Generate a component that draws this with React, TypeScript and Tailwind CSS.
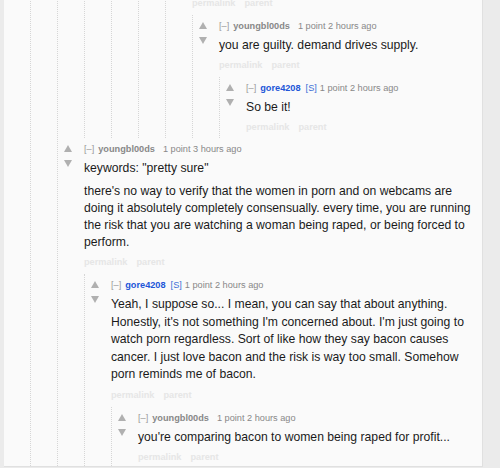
import React from "react";

const Arrows = () => (
  <div className="w-[26px] shrink-0 pl-[6px] pt-[2px] flex flex-col">
    <svg width="8" height="7" viewBox="0 0 8 7">
      <path d="M4 0 L8 7 L0 7 Z" fill="#b0b0b0" />
    </svg>
    <svg width="8" height="7" viewBox="0 0 8 7" className="mt-[8px]">
      <path d="M0 0 L8 0 L4 7 Z" fill="#b0b0b0" />
    </svg>
  </div>
);

const Footer = ({ className = "" }: { className?: string }) => (
  <div className={`flex text-[9.2px] leading-[12px] font-bold text-[#e6e6e6] whitespace-nowrap ${className}`}>
    <span>permalink</span>
    <span className="ml-[9px]">parent</span>
  </div>
);

type CommentProps = {
  author: string;
  blue?: boolean;
  submitter?: boolean;
  time: string;
  paragraphs: string[];
  lh?: string;
  children?: React.ReactNode;
};

const Comment = ({ author, blue, submitter, time, paragraphs, lh = "leading-[17px]", children }: CommentProps) => (
  <div className={`pt-[5px] ${children ? "" : "pb-[5px]"}`}>
    <div className="flex">
      <Arrows />
      <div className="flex-1 min-w-0">
        <div className="flex items-baseline text-[9.2px] leading-[12px] text-[#888] whitespace-nowrap">
          <span className="text-[#999]">[–]</span>
          <span className={`ml-[4px] font-bold ${blue ? "text-[#2256d8]" : "text-[#888]"}`}>{author}</span>
          {submitter && <span className="ml-[5px] text-[#3d6fd6]">[S]</span>}
          <span className={submitter ? "ml-[3px]" : "ml-[8px]"}>1 point {time}</span>
        </div>
        <div className={`mt-[5px] text-[12.2px] ${lh} text-[#1a1a1a]`}>
          {paragraphs.map((p, i) => (
            <p key={i} className={i === 0 ? "" : "mt-[6px]"}>
              {p}
            </p>
          ))}
        </div>
        <Footer className="mt-[5px]" />
      </div>
    </div>
    {children && <Level className="mt-[6px]">{children}</Level>}
  </div>
);

const Level = ({ children, className = "" }: { children: React.ReactNode; className?: string }) => (
  <div className={`ml-[26px] border-l border-dotted border-[#d6d6d6] ${className}`}>{children}</div>
);

export default function App() {
  return (
    <div className="w-[500px] h-[468px] bg-[#ebebeb] overflow-hidden font-['Liberation_Sans',Arial,sans-serif]">
      <div className="ml-[4px] w-[479px] h-[467px] bg-[#fafafa] border-r border-b border-[#e0e0e0] overflow-hidden pr-[2px]">
        <Level>
          <Level>
            <Level>
              <Level>
                <Level>
                  <Level>
                    <Footer className="-mt-[3px] ml-[26px]" />
                    <Level className="mt-[6px]">
                      <Comment author="youngbl00ds" time="2 hours ago" paragraphs={["you are guilty. demand drives supply."]}>
                        <Comment author="gore4208" blue submitter time="2 hours ago" paragraphs={["So be it!"]} />
                      </Comment>
                    </Level>
                  </Level>
                </Level>
              </Level>
            </Level>
            <Comment
              author="youngbl00ds"
              time="3 hours ago"
              paragraphs={[
                'keywords: "pretty sure"',
                "there's no way to verify that the women in porn and on webcams are doing it absolutely completely consensually. every time, you are running the risk that you are watching a woman being raped, or being forced to perform.",
              ]}
            >
              <Comment
                author="gore4208"
                blue
                submitter
                time="2 hours ago"
                lh="leading-[17.5px]"
                paragraphs={[
                  "Yeah, I suppose so... I mean, you can say that about anything. Honestly, it's not something I'm concerned about. I'm just going to watch porn regardless. Sort of like how they say bacon causes cancer. I just love bacon and the risk is way too small. Somehow porn reminds me of bacon.",
                ]}
              >
                <Comment author="youngbl00ds" time="2 hours ago" paragraphs={["you're comparing bacon to women being raped for profit..."]} />
              </Comment>
            </Comment>
          </Level>
        </Level>
      </div>
    </div>
  );
}
